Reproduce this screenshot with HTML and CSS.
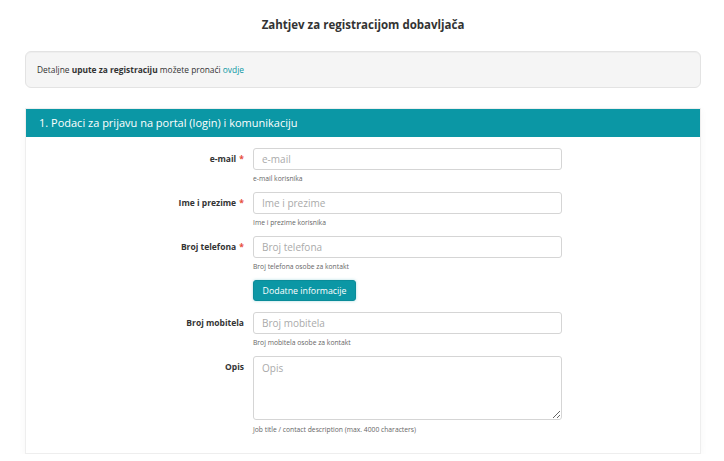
FILE: index.html
```html
<!DOCTYPE html>
<html lang="hr">
<head>
    <meta charset="UTF-8">
    <meta name="viewport" content="width=device-width, initial-scale=1.0">
    <title>Zahtjev za registracijom dobavljača</title>
    <link rel="stylesheet" href="styles.css">
</head>
<body>
  <div class="page">
    <h1 class="title">Zahtjev za registracijom dobavljača</h1>

    <div class="info">
        Detaljne <b>upute za registraciju</b> možete pronaći <a href="#">ovdje</a>
    </div>

    <div class="card">
      <div class="card-head">1. Podaci za prijavu na portal (login) i komunikaciju</div>
      <div class="card-body">
        <div class="row">
          <label class="lbl" for="email">e-mail <span class="req">*</span></label>
          <div class="field">
            <input type="text" id="email" placeholder="e-mail">
            <div class="help">e-mail korisnika</div>
          </div>
        </div>
        <div class="row">
          <label class="lbl" for="ime">Ime i prezime <span class="req">*</span></label>
          <div class="field">
            <input type="text" id="ime" placeholder="Ime i prezime">
            <div class="help">Ime i prezime korisnika</div>
          </div>
        </div>
        <div class="row">
          <label class="lbl" for="tel">Broj telefona <span class="req">*</span></label>
          <div class="field">
            <input type="text" id="tel" placeholder="Broj telefona">
            <div class="help">Broj telefona osobe za kontakt</div>
          </div>
        </div>
        <div class="row">
          <div class="lbl"></div>
          <div class="field">
            <button class="btn">Dodatne informacije</button>
          </div>
        </div>
        <div class="row">
          <label class="lbl" for="mob">Broj mobitela</label>
          <div class="field">
            <input type="text" id="mob" placeholder="Broj mobitela">
            <div class="help">Broj mobitela osobe za kontakt</div>
          </div>
        </div>
        <div class="row">
          <label class="lbl" for="opis">Opis</label>
          <div class="field">
            <textarea id="opis" placeholder="Opis"></textarea>
            <div class="help">Job title / contact description (max. 4000 characters)</div>
          </div>
        </div>
      </div>
    </div>
  </div>
</body>
</html>
```
FILE: styles.css
```css
body{
    margin: 0;
    background-color: #fff;
    font-family: "Open Sans", "Liberation Sans", sans-serif;
    color: #333;
}

.page{
    padding: 0 23px 0 25px;
}

.title{
    margin: 0;
    padding-top: 17px;
    height: 51px;
    box-sizing: border-box;
    font-size: 11.5px;
    line-height: 16px;
    font-weight: 700;
    text-align: center;
    color: #333;
}

.info{
    height: 37px;
    box-sizing: border-box;
    background-color: #f5f5f5;
    border: 1px solid #e3e3e3;
    border-radius: 6px;
    padding: 11px 11px 0;
    font-size: 8.4px;
    line-height: 13px;
    box-shadow: inset 0 1px 1px rgba(0,0,0,0.03);
}
.info b{
    font-weight: 700;
}
.info a{
    color: #0a97a4;
    text-decoration: none;
}

.card{
    margin-top: 20px;
    background-color: #fff;
    border: 1px solid #eee;
    box-shadow: 0 2px 8px rgba(0,0,0,0.04);
}

.card-head{
    height: 28px;
    box-sizing: border-box;
    background-color: #0b97a5;
    color: #fff;
    font-size: 11px;
    line-height: 28px;
    padding-left: 13px;
}

.card-body{
    padding: 11px 0 10px;
}

.row{
    display: flex;
    margin-bottom: 8px;
}

.lbl{
    width: 218px;
    flex: none;
    text-align: right;
    padding-right: 9px;
    padding-top: 4px;
    font-size: 8.5px;
    font-weight: 700;
    line-height: 13px;
    color: #333;
}
.req{
    color: #e74c3c;
    margin-left: 1px;
}

.field{
    width: 309px;
}

input, textarea{
    display: block;
    width: 100%;
    box-sizing: border-box;
    height: 22px;
    border: 1px solid #d5d5d5;
    border-radius: 3px;
    padding: 0 8px;
    font-family: "Open Sans", "Liberation Sans", sans-serif;
    font-size: 10px;
    color: #555;
    background: #fff;
    outline: none;
}
textarea{
    height: 64px;
    padding: 4px 8px;
    resize: vertical;
}
input::placeholder, textarea::placeholder{
    color: #aaa;
}

.help{
    margin-top: 3px;
    font-size: 6.75px;
    line-height: 11px;
    color: #666;
}
textarea + .help{
    margin-top: 4px;
}

.btn{
    display: block;
    margin: 0 0 3px;
    height: 21px;
    width: 103px;
    box-sizing: border-box;
    background-color: #0b97a5;
    color: #fff;
    border: 1px solid #0a8c99;
    border-radius: 3px;
    font-family: "Open Sans", "Liberation Sans", sans-serif;
    font-size: 8.8px;
    padding: 0;
    box-shadow: 0 0 3px rgba(11,151,165,0.35);
}
```
